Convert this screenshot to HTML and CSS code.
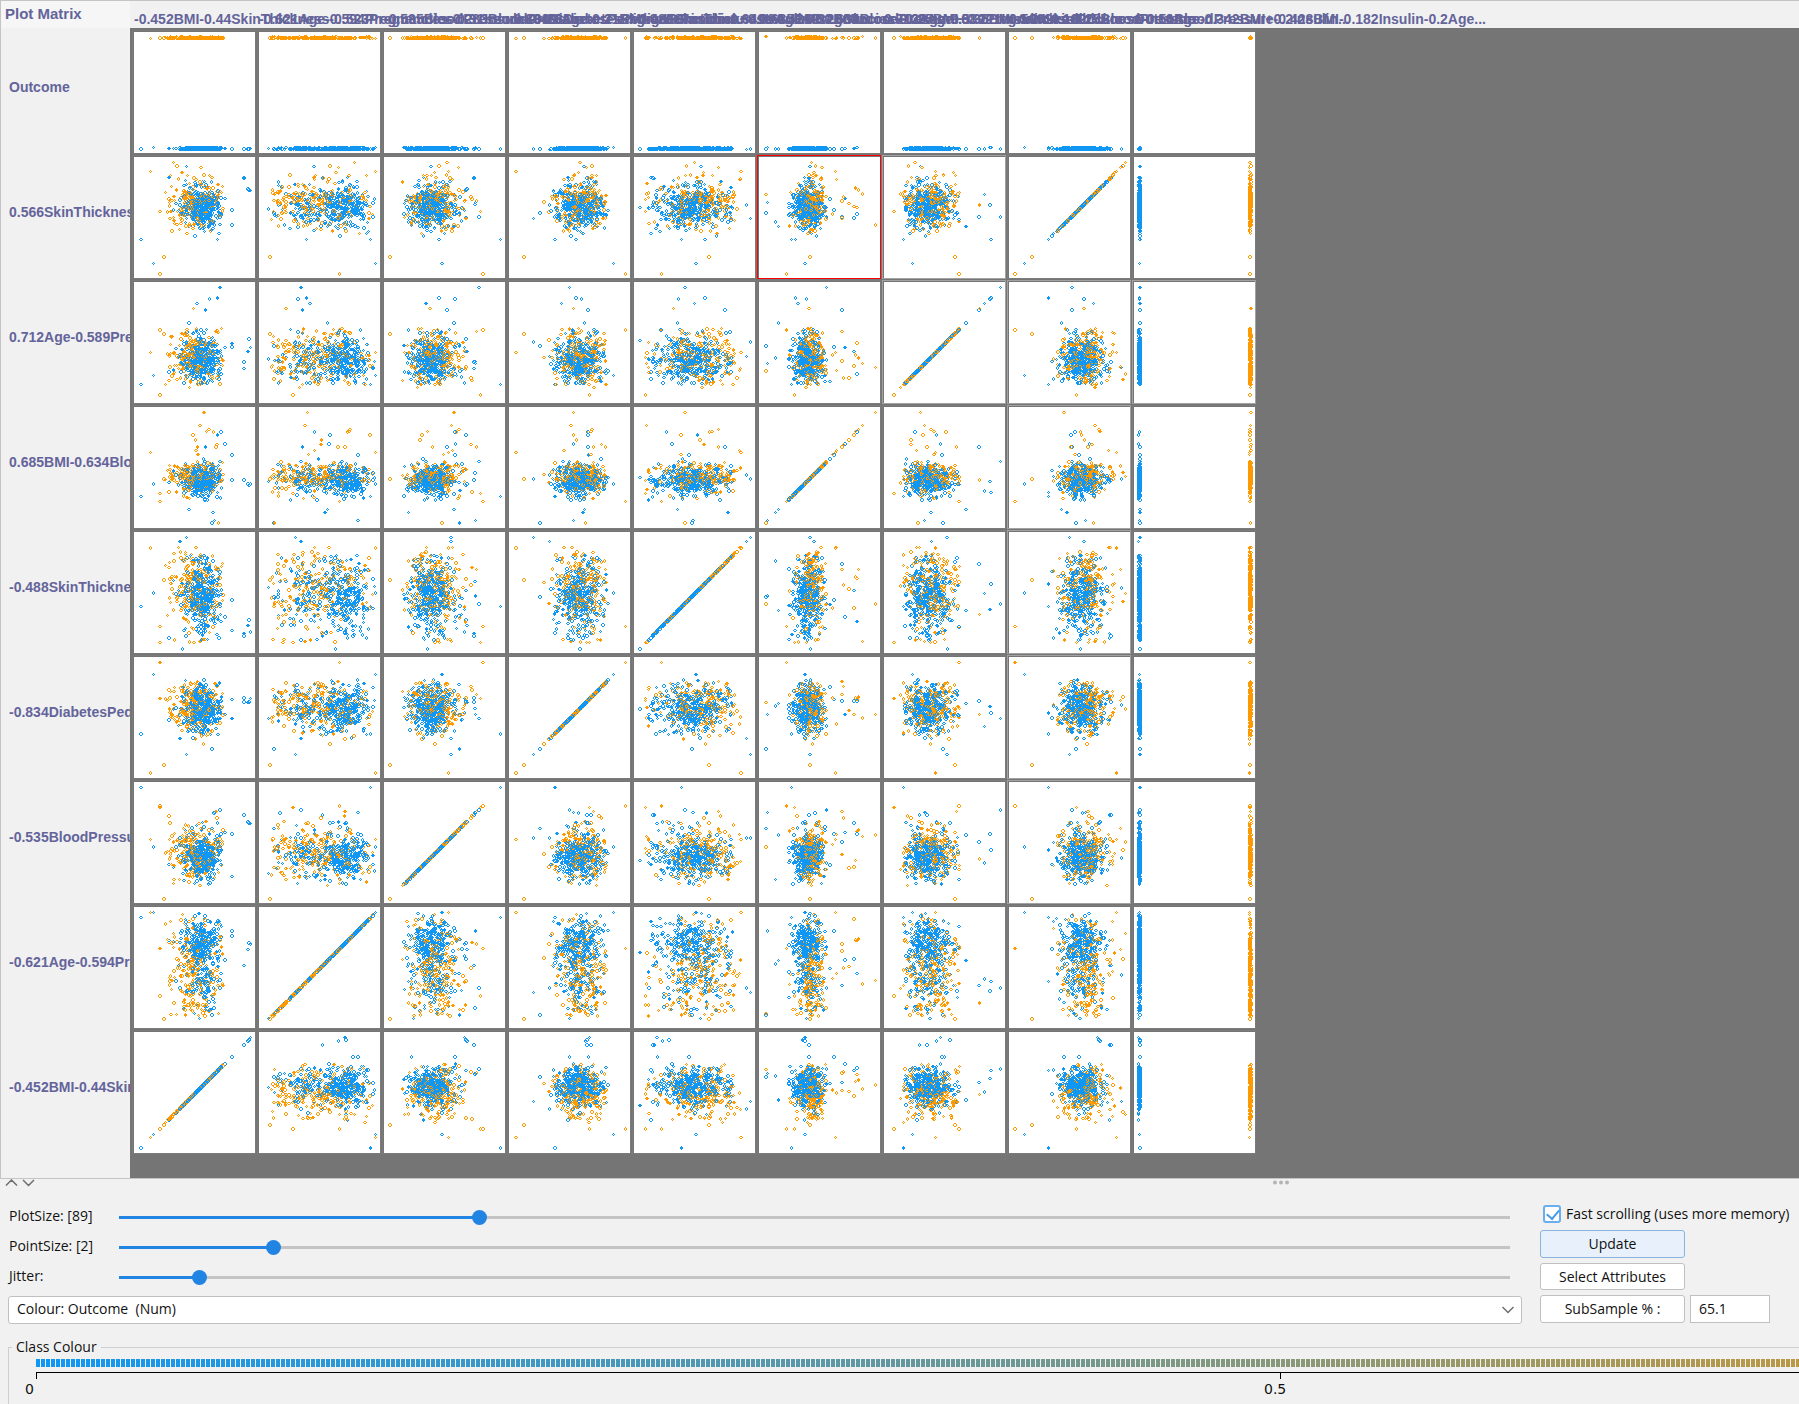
FILE: index.html
```html
<!DOCTYPE html>
<html lang="en">
<head>
<meta charset="utf-8">
<title>Plot Matrix</title>
<link rel="stylesheet" href="styles.css">
</head>
<body>
<main class="viewer">
  <h1 class="corner">Plot Matrix</h1>
  <div class="col-labels">
    <span>-0.452BMI-0.44SkinThickness-0.523Pregnancies-0.31Insulin-0.26Age...</span>
    <span>-0.621Age-0.594Pregnancies-0.283BloodPressure-0.21BMI-0.186Insulin...</span>
    <span>-0.535BloodPressure-0.466DiabetesPedigreeFunction+0.39Age-0.32BMI...</span>
    <span>-0.834DiabetesPedigreeFunction-0.349Insulin-0.26Glucose+0.25BMI...</span>
    <span>-0.488SkinThickness-0.429Pregnancies-0.39Age+0.35BMI-0.24Insulin...</span>
    <span>0.685BMI-0.634BloodPressure+0.211Insulin-0.182Glucose-0.16Age...</span>
    <span>0.712Age-0.589Pregnancies-0.25BloodPressure-0.342BMI+0.2Insulin...</span>
    <span>0.566SkinThickness-0.51BloodPressure-0.428BMI-0.182Insulin-0.2Age...</span>
    <span>Outcome</span>
  </div>
  <div class="row-labels">
    <span>Outcome</span>
    <span>0.566SkinThickness</span>
    <span>0.712Age-0.589Pregnancies</span>
    <span>0.685BMI-0.634BloodPressure</span>
    <span>-0.488SkinThickness</span>
    <span>-0.834DiabetesPedigree</span>
    <span>-0.535BloodPressure</span>
    <span>-0.621Age-0.594Pregnancies</span>
    <span>-0.452BMI-0.44SkinThickness</span>
  </div>
  <div class="plots"><div class="matrix" id="matrix"></div></div>
</main>

<div class="splitter">
  <svg class="collapse" width="30" height="8" viewBox="0 0 30 8" fill="none" stroke="#6e6e6e" stroke-width="1.5"><path d="M1 6.5 6.5 1 12 6.5M18 1l5.500 5.500L29 1"/></svg>
  <svg class="grip" width="18" height="5" viewBox="0 0 18 5" fill="#b4b4b4"><circle cx="3" cy="2.500" r="2"/><circle cx="9" cy="2.500" r="2"/><circle cx="15" cy="2.500" r="2"/></svg>
</div>

<section class="controls">
  <div class="left">
    <div class="slider-row"><label for="plotsize">PlotSize: [89]</label><input id="plotsize" type="range" step="any" value="25.93" style="--fill:25.93%"></div>
    <div class="slider-row"><label for="pointsize">PointSize: [2]</label><input id="pointsize" type="range" step="any" value="11.14" style="--fill:11.14%"></div>
    <div class="slider-row"><label for="jitter">Jitter:</label><input id="jitter" type="range" step="any" value="5.82" style="--fill:5.82%"></div>
    <div class="combo">
      <select aria-label="Colour"><option>Colour: Outcome&nbsp; (Num)</option></select>
      <svg width="12" height="8" viewBox="0 0 12 8" fill="none" stroke="#6e6e6e" stroke-width="1.500"><path d="M.5 1 6 6.500 11.500 1"/></svg>
    </div>
  </div>
  <div class="right">
    <label class="check"><input type="checkbox" checked>Fast scrolling (uses more memory)</label>
    <button class="primary" type="button">Update</button>
    <button class="compact" type="button">Select Attributes</button>
    <div class="sample"><button type="button">SubSample % :</button><input type="text" value="65.1" aria-label="SubSample percentage"></div>
  </div>
</section>

<fieldset class="legend">
  <legend>Class Colour</legend>
  <div class="scale">
    <div class="ramp"></div>
    <div class="axis"><i></i><i></i></div>
    <div class="ticks"><span>0</span><span>0.5</span></div>
  </div>
</fieldset>
<script src="plots.js"></script>
</body>
</html>
```
FILE: styles.css
```css
* { box-sizing: border-box; }
body {
  margin: 0;
  height: 100vh;
  overflow: hidden;
  background: #f1f1f1;
  color: #111;
  font: 14px/20px "Open Sans", "Noto Sans", sans-serif;
}

/* Scroll pane with headers and plots */
.viewer {
  display: grid;
  grid-template-columns: 129px 1fr;
  grid-template-rows: 27px auto;
  border: solid #c4c4c4;
  border-width: 1px 0 1px 1px;
  color: #64649b;
  font: bold 14px/20px "Liberation Sans", Arial, sans-serif;
}
.corner {
  margin: 0;
  padding: 3px 4px;
  background: #f6f6f6;
  font-size: 15px;
  line-height: 20px;
}
.col-labels {
  display: flex;
  min-width: 0;
  padding: 8px 0 0 4px;
  line-height: 20px;
}
.col-labels span { flex: 0 0 125px; width: 125px; white-space: nowrap; }
.row-labels { overflow: hidden; padding: 2px 0 0 8px; }
.row-labels span {
  display: block;
  height: 125px;
  padding-top: 47px;
  white-space: nowrap;
}
.plots { background: #757575; padding: 2px 0 24px 2px; }
.matrix { display: grid; grid-template-columns: repeat(9, 124px); gap: 1px; }
.cell {
  border: 1px solid #7b7b7b;
  padding: 1px 0 0 1px;
}
.cell.visited { border-color: #a2a2a2; }
.cell.selected { border-color: #f00; }
.cell canvas { display: block; width: 121px; height: 121px; background: #fff; }

/* Divider */
.splitter { position: relative; height: 16px; }
.collapse { position: absolute; left: 5px; top: 0; }
.grip { position: absolute; left: 71%; top: 1px; margin-left: -5px; }

/* Controls */
.controls {
  display: grid;
  grid-template-columns: 1fr 251px;
  column-gap: 18px;
  padding: 7px 8px 0;
}
.slider-row { display: flex; height: 30px; padding: 4px 5px 0 1px; }
.slider-row label { flex: 0 0 102px; }
.slider-row input {
  flex: 1;
  appearance: none;
  height: 16px;
  margin: 3px 0 0;
  background: none;
}
.slider-row input::-webkit-slider-runnable-track {
  height: 15px;
  background: linear-gradient(90deg, #2284e2 var(--fill), #c4c4c4 var(--fill)) no-repeat center / calc(100% - 15px) 3px;
}
.slider-row input::-webkit-slider-thumb {
  appearance: none;
  width: 15px;
  height: 15px;
  border-radius: 50%;
  background: #2284e2;
}
.combo { position: relative; margin-top: 4px; }
.combo svg { position: absolute; right: 8px; top: 10px; }
select, button, .sample input {
  height: 28px;
  border: 1px solid #c0c0c0;
  border-radius: 3px;
  background: #fff;
  color: #111;
  font: inherit;
}
select { appearance: none; display: block; width: 100%; padding: 0 8px 2px; }
.right { display: flex; flex-direction: column; align-items: flex-start; gap: 5px; }
.right button { width: 145px; padding: 0; }
.right .primary { border-color: #8ab4dc; background: #e8f1fb; }
.right .compact { height: 27px; }
.check { display: flex; align-items: center; gap: 5px; height: 23px; padding-left: 3px; white-space: nowrap; }
.check input {
  appearance: none;
  width: 18px;
  height: 18px;
  margin: 0;
  border: 2px solid #6aaeed;
  border-radius: 3px;
  background: #fff;
}
.check input:checked::before {
  content: "";
  display: block;
  width: 6px;
  height: 10px;
  margin: 0 4px;
  border: solid #459be8;
  border-width: 0 2px 2px 0;
  transform: rotate(40deg);
}
.sample { display: flex; gap: 5px; }
.sample input { width: 80px; padding: 0 8px 2px; border-radius: 0; }

/* Colour legend */
.legend {
  min-width: 0;
  height: 120px;
  margin: 13px 0 0 8px;
  padding: 2px 0 0 16px;
  border: 1px solid #cfcfcf;
  border-right: 0;
}
.legend legend { margin-left: -13px; padding: 0 4px; line-height: 20px; }
.scale { overflow: hidden; }
.ramp, .axis { width: 2488px; margin-left: 11px; }
.ramp {
  height: 8px;
  background:
    repeating-linear-gradient(90deg, transparent 0 4px, #f1f1f1 4px 5px),
    linear-gradient(90deg, #1097f3, #ff9900);
}
.axis { display: flex; height: 7px; margin-top: 5px; border-top: 1px solid #000; }
.axis i { flex: 1; border-left: 1px solid #000; }
.ticks { display: flex; width: 2478px; font: 14px/20px "DejaVu Sans", sans-serif; }
.ticks span { flex: 1; }
```
FILE: plots.js
```js
const BLUE = '#1097f3', ORANGE = '#ff9900', SIZE = 121;

let seed = 20240611;
function rnd() {
  seed = (seed + 0x6d2b79f5) | 0;
  let t = Math.imul(seed ^ (seed >>> 15), 1 | seed);
  t = (t + Math.imul(t ^ (t >>> 7), 61 | t)) ^ t;
  return ((t ^ (t >>> 14)) >>> 0) / 4294967296;
}
// Normal draw with a heavier tail, kept between lo and hi.
function gauss(mean, sd, lo, hi) {
  for (;;) {
    const spread = rnd() < 0.15 ? sd * 1.6 : sd * 0.88;
    const v = mean + spread * Math.sqrt(-2 * Math.log(1 - rnd())) * Math.cos(2 * Math.PI * rnd());
    if (v >= lo && v <= hi) return v;
  }
}

// Extreme instances: class, then the eight components in plot units.
const points = [
  [0, 6, 111, 116, 45, 47, 32, 19, 39], [1, 16, 116, 64, 6, 106, 76, 51, 107],
  [0, 19, 116, 57, 104, 61, 45, 28, 15], [1, 25, 80, 98, 116, 27, 27, 74, 5],
  [1, 29, 10, 5, 14, 74, 50, 70, 22], [0, 116, 85, 80, 80, 22, 45, 56, 88],
  [0, 113, 79, 82, 76, 28, 45, 52, 90], [0, 109, 63, 89, 77, 18, 49, 42, 101],
  [0, 109, 63, 89, 81, 20, 49, 35, 100], [0, 114, 86, 81, 77, 34, 43, 65, 89],
  [0, 97, 98, 70, 79, 54, 74, 57, 69], [0, 97, 93, 27, 60, 23, 49, 60, 54],
  [0, 85, 41, 94, 60, 50, 67, 116, 62], [0, 83, 47, 54, 66, 70, 36, 106, 39],
  [0, 75, 38, 70, 72, 44, 47, 105, 74], [0, 62, 50, 41, 52, 60, 38, 100, 84],
  [0, 71, 43, 62, 78, 90, 82, 94, 62], [1, 59, 26, 45, 64, 39, 49, 95, 74],
  [1, 69, 48, 69, 64, 50, 116, 36, 54], [1, 65, 45, 67, 61, 12, 103, 40, 85],
  [1, 74, 90, 74, 82, 84, 99, 46, 89], [1, 79, 88, 72, 79, 75, 97, 61, 71],
  [0, 86, 55, 70, 78, 32, 97, 30, 65], [0, 83, 70, 81, 78, 63, 94, 52, 61],
  [1, 58, 110, 37, 64, 46, 94, 38, 72], [0, 90, 69, 71, 64, 37, 85, 56, 80],
  [1, 82, 61, 86, 92, 69, 84, 26, 82], [1, 81, 85, 92, 84, 84, 82, 72, 78],
  [0, 52, 36, 66, 24, 116, 50, 62, 60], [0, 45, 41, 66, 40, 112, 54, 47, 74],
  [0, 54, 68, 69, 75, 43, 19, 81, 52], [0, 78, 65, 24, 73, 93, 16, 46, 57],
  [0, 77, 14, 75, 30, 57, 6, 58, 66], [0, 80, 98, 91, 64, 58, 8, 40, 76],
  [1, 84, 15, 57, 76, 50, 6, 33, 84], [1, 25, 33, 96, 80, 11, 35, 9, 67],
  [0, 48, 76, 43, 70, 5, 51, 63, 71], [1, 39, 95, 62, 70, 60, 52, 30, 116],
  [1, 42, 70, 54, 82, 52, 56, 24, 113], [0, 52, 54, 46, 74, 66, 50, 36, 112]
];

for (let i = 0; i < 520; i++) {
  const c = rnd() < 0.36 ? 1 : 0;
  points.push(c ? [1,
    gauss(60, 13, 27, 89), gauss(60, 29, 9, 115), gauss(52, 13, 17, 94), gauss(73, 14, 31, 97),
    gauss(65, 23, 11, 106), rnd() < 0.04 ? gauss(80, 14, 60, 100) : gauss(52, 8, 28, 80),
    gauss(47, 15, 6, 88), gauss(76, 14, 41, 115)
  ] : [0,
    gauss(68, 10, 26, 88), rnd() < 0.6 ? gauss(88, 11, 20, 116) : gauss(56, 26, 9, 110),
    gauss(46, 11, 17, 92), gauss(70, 12, 31, 99), gauss(58, 19, 12, 98),
    gauss(48, 8, 28, 76), gauss(44, 12, 17, 92), gauss(72, 11, 42, 112)
  ]);
}
for (const p of points) p.push(p[0] ? 115 + rnd() * 1.4 : 4.2 + rnd() * 1.4);

// Small hollow ovals, three or four pixels on each axis.
function mark(g, x, y, w, h) {
  g.fillRect(x + 1, y, w - 2, 1);
  g.fillRect(x + 1, y + h - 1, w - 2, 1);
  g.fillRect(x, y + 1, 1, h - 2);
  g.fillRect(x + w - 1, y + 1, 1, h - 2);
}

const order = [8, 7, 6, 5, 4, 3, 2, 1];
const visited = new Set(['1,7', '2,7', '2,8', '2,9', '3,8', '4,8', '5,8', '6,8']);
const matrix = document.getElementById('matrix');
[9, ...order].forEach((yVar, row) => {
  for (let xVar = 1; xVar <= 9; xVar++) {
    const cell = document.createElement('div');
    cell.className = 'cell';
    if (row === 1 && xVar === 6) cell.classList.add('selected');
    if (visited.has(row + ',' + xVar)) cell.classList.add('visited');
    const canvas = document.createElement('canvas');
    canvas.width = canvas.height = SIZE;
    const g = canvas.getContext('2d');
    for (const p of points) {
      const x = Math.floor(p[xVar] - 0.7), y = Math.floor(SIZE - p[yVar] - 0.7);
      const w = Math.floor(p[xVar] * 1.5) % 2 ? 4 : 3, h = Math.floor(p[yVar] * 1.5) % 2 ? 4 : 3;
      g.fillStyle = p[0] ? ORANGE : BLUE;
      mark(g, x, y, w, h);
      if (w !== h && (x + y) % 4 === 0) g.fillRect(x + 1, y + 1, w - 2, h - 2);
    }
    cell.append(canvas);
    matrix.append(cell);
  }
});
```
